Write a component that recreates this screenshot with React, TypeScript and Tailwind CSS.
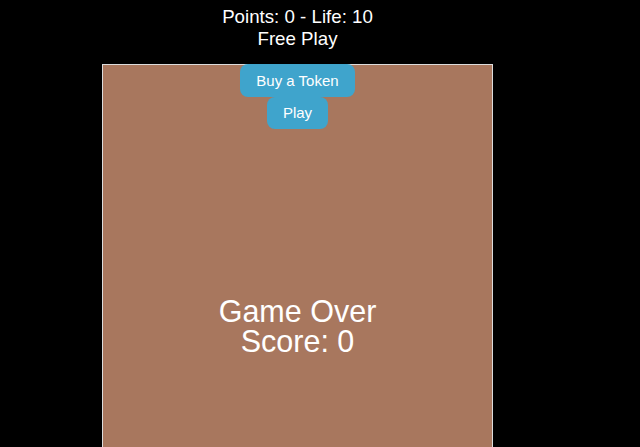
import React from "react";

export default function App() {
  return (
    <div
      className="w-[640px] h-[447px] overflow-hidden bg-black text-white"
      style={{ fontFamily: '"Liberation Sans", Arial, sans-serif' }}
    >
      <div className="ml-[102px] w-[391px] flex flex-col">
        <div className="h-[64px] pt-[6px] flex flex-col items-center text-[18.72px] leading-[22px]">
          <div>Points: 0 - Life: 10</div>
          <div>Free Play</div>
        </div>
        <div className="relative h-[420px] border border-[#dcdcdc] bg-[#a8775e]">
          <div className="absolute top-[-1px] left-0 right-0 flex flex-col items-center">
            <button className="px-4 py-2 text-[15px] leading-[17px] rounded-[8px] bg-[#3fa4cc] text-white">
              Buy a Token
            </button>
            <button className="px-4 py-2 text-[15px] leading-[16px] rounded-[8px] bg-[#3fa4cc] text-white">
              Play
            </button>
          </div>
          <div className="pt-[231px] flex flex-col items-center text-[30.5px] leading-[30px]">
            <div>Game Over</div>
            <div>Score: 0</div>
          </div>
        </div>
      </div>
    </div>
  );
}
